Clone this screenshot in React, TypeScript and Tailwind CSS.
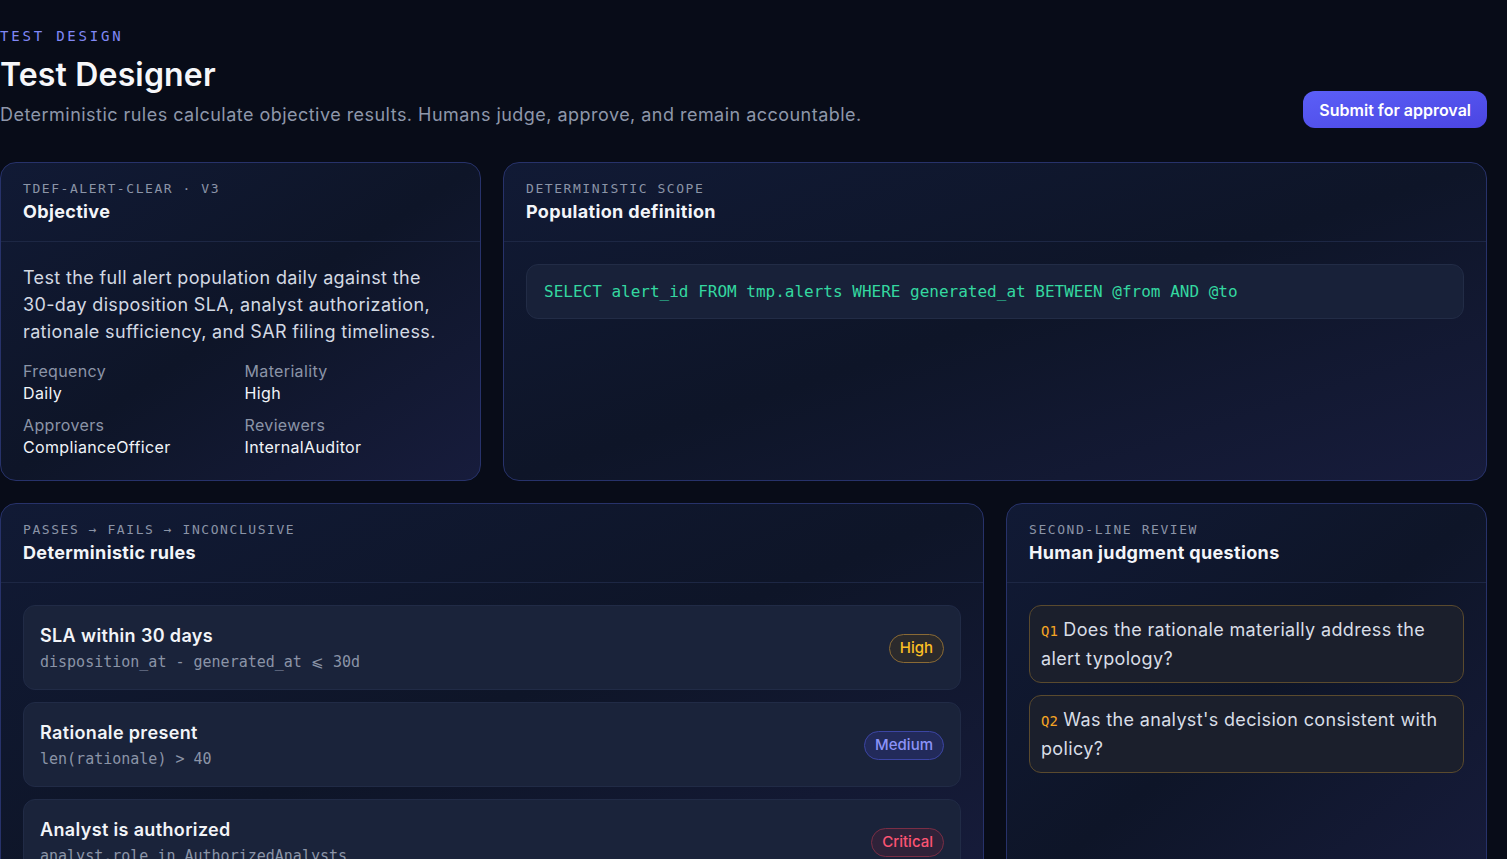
import React from "react";

const sans = "font-['Inter','Noto_Sans',sans-serif]";
const mono = "font-['DejaVu_Sans_Mono','Liberation_Mono',monospace]";

type Rule = { title: string; expr: string; level: "High" | "Medium" | "Critical" };

const rules: Rule[] = [
    { title: "SLA within 30 days", expr: "disposition_at - generated_at ⩽ 30d", level: "High" },
    { title: "Rationale present", expr: "len(rationale) > 40", level: "Medium" },
    { title: "Analyst is authorized", expr: "analyst.role in AuthorizedAnalysts", level: "Critical" },
];

const badgeStyles: Record<Rule["level"], string> = {
    High: "border-[#8a6a35] bg-[#2b2a2c] text-[#fbbf24]",
    Medium: "border-[#3c45a3] bg-[#222a5a] text-[#8b93f8]",
    Critical: "border-[#7a2e45] bg-[#2f2239] text-[#fb5473]",
};

const Card = ({ label, title, children, className = "" }: { label: string; title: string; children: React.ReactNode; className?: string }) => (
    <section className={`rounded-[16px] border border-[#27326a] bg-gradient-to-br from-[#111a35] via-[#0e1528] to-[#171c3c] overflow-hidden ${className}`}>
        <div className="px-[22px] pt-[18px] pb-[17px] border-b border-[#1d2744]">
            <p className={`${mono} text-[13px] leading-4 tracking-[0.12em] text-[#8b94a7] uppercase`}>{label}</p>
            <h2 className="mt-[3px] text-[18px] leading-6 font-bold text-[#f3f5f9]">{title}</h2>
        </div>
        <div className="p-[22px]">{children}</div>
    </section>
);

const Meta = ({ label, value }: { label: string; value: string }) => (
    <div>
        <p className="text-[16px] leading-[22px] text-[#8b94a7]">{label}</p>
        <p className="text-[16px] leading-[22px] text-[#f1f4f8]">{value}</p>
    </div>
);

export default function App() {
    return (
        <div className={`${sans} tracking-[0.022em] min-h-screen bg-[#080c18] pr-5 pt-[26px] pb-10 overflow-hidden`}>
            <header className="flex items-end justify-between">
                <div>
                    <p className={`${mono} text-[14px] leading-5 tracking-[0.2em] text-[#8088f5]`}>TEST DESIGN</p>
                    <h1 className="mt-[9px] text-[32px] leading-10 font-semibold text-[#f6f7fa] tracking-[0.005em]">Test Designer</h1>
                    <p className="mt-[6px] text-[18px] leading-[27px] text-[#8e97aa] tracking-[0.026em]">
                        Deterministic rules calculate objective results. Humans judge, approve, and remain accountable.
                    </p>
                </div>
                <button className="h-[37px] px-4 rounded-[12px] bg-gradient-to-br from-[#5b5ff7] to-[#4b45e2] text-[16px] font-semibold tracking-normal text-white">
                    Submit for approval
                </button>
            </header>

            <div className="mt-[34px] grid grid-cols-[481px_1fr] gap-[22px]">
                <Card label="TDEF-ALERT-CLEAR · V3" title="Objective">
                    <p className="text-[18px] leading-[27px] text-[#d3d9e3]">
                        Test the full alert population daily against the <span className="whitespace-nowrap">30-day</span> disposition SLA, analyst authorization, rationale sufficiency, and SAR filing timeliness.
                    </p>
                    <div className="mt-[15px] grid grid-cols-2 gap-x-2 gap-y-[10px]">
                        <Meta label="Frequency" value="Daily" />
                        <Meta label="Materiality" value="High" />
                        <Meta label="Approvers" value="ComplianceOfficer" />
                        <Meta label="Reviewers" value="InternalAuditor" />
                    </div>
                </Card>
                <Card label="Deterministic scope" title="Population definition">
                    <div className={`${mono} tracking-normal h-[55px] flex items-center px-[17px] rounded-[12px] border border-[#222c46] bg-[#182139] text-[16px] text-[#34d8a0]`}>
                        SELECT alert_id FROM tmp.alerts WHERE generated_at BETWEEN @from AND @to
                    </div>
                </Card>
            </div>

            <div className="mt-[22px] grid grid-cols-[1fr_481px] gap-[22px]">
                <Card label="Passes → Fails → Inconclusive" title="Deterministic rules">
                    <div className="flex flex-col gap-3">
                        {rules.map((r) => (
                            <div key={r.title} className="flex items-center justify-between rounded-[12px] border border-[#212b46] bg-[#1a233a] px-4 pt-[18px] pb-[17px]">
                                <div>
                                    <p className="text-[18px] leading-6 font-semibold text-[#f2f4f8]">{r.title}</p>
                                    <p className={`${mono} tracking-normal mt-1 text-[15px] leading-5 text-[#8b94a7]`}>{r.expr}</p>
                                </div>
                                <span className={`rounded-full border px-[10px] h-[29px] flex items-center text-[15px] font-medium tracking-normal ${badgeStyles[r.level]}`}>
                                    {r.level}
                                </span>
                            </div>
                        ))}
                    </div>
                </Card>
                <Card label="Second-line review" title="Human judgment questions">
                    <div className="flex flex-col gap-3">
                        {[
                            "Does the rationale materially address the alert typology?",
                            "Was the analyst's decision consistent with policy?",
                        ].map((q, i) => (
                            <p key={q} className="rounded-[12px] border border-[#5a4a2e] bg-[#1b1f2c] px-[11px] pt-[10px] pb-[10px] text-[18px] leading-[27px] text-[#d8dde6]">
                                <span className={`${mono} tracking-normal text-[14px] text-[#f5a524]`}>Q{i + 1}</span> {q}
                            </p>
                        ))}
                    </div>
                </Card>
            </div>
        </div>
    );
}
